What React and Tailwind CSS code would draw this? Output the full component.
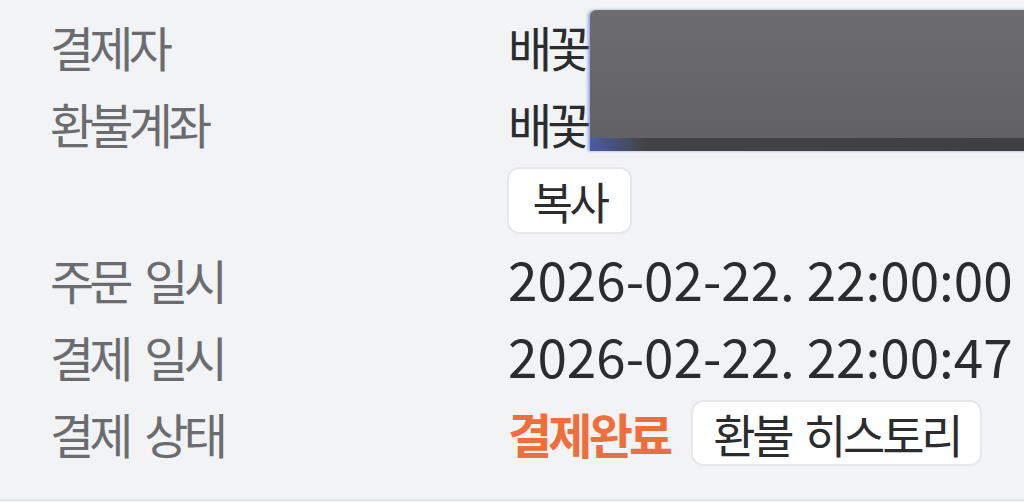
import React from 'react';

const font = { fontFamily: '"Noto Sans CJK KR", "Noto Sans", sans-serif' };

function Row({ label, children, className = 'h-[77px]' }) {
  return (
    <div className={`grid grid-cols-[458px_1fr] items-center ${className}`}>
      <div className="text-[48px] text-[#6b6c6f] tracking-[-0.1em] [word-spacing:0.2em]">{label}</div>
      <div className="flex items-center text-[#2b2c2e]">{children}</div>
    </div>
  );
}

export default function App() {
  return (
    <div
      className="relative w-[1024px] h-[502px] overflow-hidden bg-[#f2f3f5] leading-none"
      style={font}
    >
      <div className="flex flex-col pl-[50px] pt-[7px] border-b-2 border-[#e3e4e7] h-[501px]">
        <Row label="결제자">
          <span className="text-[48px] tracking-[-0.1em]">배꽃</span>
        </Row>
        <Row label="환불계좌">
          <span className="text-[48px] tracking-[-0.1em]">배꽃</span>
        </Row>
        <Row label="" className="h-[79px]">
          <button className="h-[67px] w-[125px] -ml-px rounded-[12px] bg-white border-2 border-[#e6e7ea] text-[44px] tracking-[-0.08em] text-[#2b2c2e]">
            복사
          </button>
        </Row>
        <Row label="주문 일시">
          <span className="text-[53px]">2026-02-22. 22:00:00</span>
        </Row>
        <Row label="결제 일시">
          <span className="text-[53px]">2026-02-22. 22:00:47</span>
        </Row>
        <Row label="결제 상태">
          <span className="text-[48px] font-bold text-[#ec6f3c] tracking-[-0.08em]">결제완료</span>
          <button className="ml-[22px] h-[66px] w-[291px] rounded-[12px] bg-white border-2 border-[#e6e7ea] text-[46px] tracking-[-0.07em] [word-spacing:0.12em] text-[#2b2c2e]">
            환불 히스토리
          </button>
        </Row>
      </div>

      {/* redaction box over the names */}
      <div className="absolute left-[590px] top-[10px] w-[450px] h-[141px] rounded-tl-[6px] overflow-hidden shadow-[-2px_0_3px_rgba(80,100,220,0.55)]">
        <div className="h-[128px] bg-gradient-to-b from-[#6d6d6f] to-[#626264]" />
        <div className="h-[13px] bg-gradient-to-r from-[#4a5aa8] via-[#444446] via-[12%] to-[#3f3f41]" />
      </div>
    </div>
  );
}
